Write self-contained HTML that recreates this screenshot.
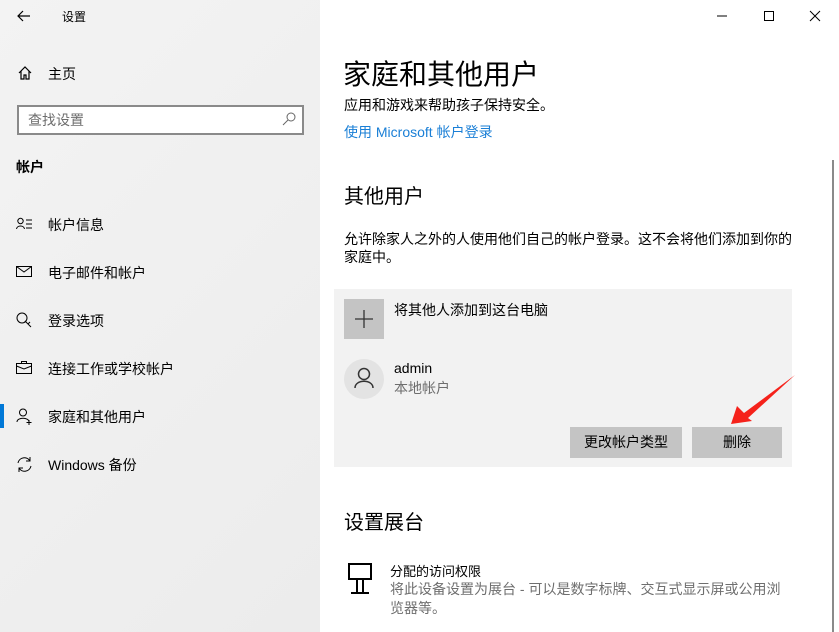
<!DOCTYPE html>
<html><head><meta charset="utf-8"><style>
*{margin:0;padding:0;box-sizing:border-box}
body{width:839px;height:632px;overflow:hidden;position:relative;background:#fff;font-family:"Liberation Sans","Microsoft YaHei","Noto Sans CJK SC",sans-serif;color:#000}
.a{position:absolute;white-space:nowrap}
#side{position:absolute;left:0;top:0;width:320px;height:632px;background:linear-gradient(135deg,#f3f3f3,#ececec)}
.it{position:absolute;left:48px;font-size:14px}
.ic{position:absolute;left:16px}
</style></head><body>
<div id="side">
<svg class="a" style="left:16px;top:9px" width="16" height="14"><path d="M14 7H2M7 2L2 7L7 12" fill="none" stroke="#000" stroke-width="1.2"/></svg>
<div class="a" style="left:62px;top:8px;font-size:12px">设置</div>
<svg class="a" style="left:17px;top:65px" width="16" height="16"><path d="M2 8L8 2L14 8M4 6V14H7V10H9V14H12V6" fill="none" stroke="#000" stroke-width="1.2"/></svg>
<div class="a" style="left:48px;top:64px;font-size:14px">主页</div>
<div class="a" style="left:17px;top:105px;width:287px;height:30px;border:2px solid #8a8a8a;background:#fff"></div>
<div class="a" style="left:28px;top:110px;font-size:14px;color:#6d6d6d">查找设置</div>
<svg class="a" style="left:281px;top:111px" width="16" height="16"><circle cx="10" cy="6" r="4" fill="none" stroke="#666" stroke-width="1"/><path d="M7 9L2 14" stroke="#666"/></svg>
<div class="a" style="left:16px;top:157px;font-size:14px;font-weight:bold">帐户</div>
<svg class="ic" style="top:217px" width="18" height="14"><circle cx="4.5" cy="4" r="2.7" fill="none" stroke="#000"/><path d="M0.5 12C1 8 8 8 8.5 12M10 3H16M10 7H16M10 11H16" fill="none" stroke="#000"/></svg>
<div class="it" style="top:215px">帐户信息</div>
<svg class="ic" style="top:266px" width="18" height="12"><rect x="0.5" y="0.5" width="15" height="10" fill="none" stroke="#000"/><path d="M0.5 0.5L8 6L15.5 0.5" fill="none" stroke="#000"/></svg>
<div class="it" style="top:263px">电子邮件和帐户</div>
<svg class="ic" style="top:312px" width="18" height="17"><circle cx="6" cy="6" r="5" fill="none" stroke="#000"/><path d="M9 9L15 15M12 12L14 10" fill="none" stroke="#000"/></svg>
<div class="it" style="top:311px">登录选项</div>
<svg class="ic" style="top:361px" width="18" height="13"><rect x="0.5" y="2.5" width="15" height="10" fill="none" stroke="#000"/><path d="M5.5 2.5V0.5H10.5V2.5M0.5 5L8 8L15.5 5" fill="none" stroke="#000"/></svg>
<div class="it" style="top:359px">连接工作或学校帐户</div>
<div class="a" style="left:0;top:404px;width:4px;height:24px;background:#0078d7"></div>
<svg class="ic" style="top:408px" width="18" height="17"><circle cx="7" cy="4.5" r="3.5" fill="none" stroke="#000"/><path d="M1 14C1 9 13 9 13 14M13 12V17M10.5 14.5H15.5" fill="none" stroke="#000"/></svg>
<div class="it" style="top:407px">家庭和其他用户</div>
<svg class="ic" style="top:456px" width="18" height="17"><path d="M2 7A6.5 6.5 0 0 1 14 5M15 10A6.5 6.5 0 0 1 3 12M14 1V5H10M3 16V12H7" fill="none" stroke="#000"/></svg>
<div class="it" style="top:455px">Windows 备份</div>
</div>
<svg class="a" style="left:716px;top:8px" width="110" height="16"><path d="M1 8H11" stroke="#000"/><rect x="48.5" y="3.5" width="9" height="9" fill="none" stroke="#000"/><path d="M94 3L104 13M104 3L94 13" stroke="#000"/></svg>
<div class="a" style="left:343px;top:53px;font-size:28px">家庭和其他用户</div>
<div class="a" style="left:344px;top:95px;font-size:14px">应用和游戏来帮助孩子保持安全。</div>
<div class="a" style="left:344px;top:122px;font-size:14px;color:#1a7fd6">使用 Microsoft 帐户登录</div>
<div class="a" style="top:160px;width:2px;height:472px;background:#8a8a8a;left:832px"></div>
<div class="a" style="left:344px;top:180px;font-size:20px">其他用户</div>
<div class="a" style="left:344px;top:230px;font-size:14px;line-height:18px;white-space:normal;width:455px">允许除家人之外的人使用他们自己的帐户登录。这不会将他们添加到你的家庭中。</div>
<div class="a" style="left:334px;top:289px;width:458px;height:178px;background:#f2f2f2"></div>
<div class="a" style="left:344px;top:299px;width:40px;height:40px;background:#c4c4c4"></div>
<svg class="a" style="left:344px;top:299px" width="40" height="40"><path d="M20 11V29M11 20H29" stroke="#333" stroke-width="1.3"/></svg>
<div class="a" style="left:394px;top:300px;font-size:14px">将其他人添加到这台电脑</div>
<div class="a" style="left:344px;top:359px;width:40px;height:40px;border-radius:50%;background:#e3e3e3"></div>
<svg class="a" style="left:344px;top:359px" width="40" height="40"><circle cx="20" cy="15" r="5.5" fill="none" stroke="#333" stroke-width="1.5"/><path d="M11 29C11 20 29 20 29 29" fill="none" stroke="#333" stroke-width="1.5"/></svg>
<div class="a" style="left:394px;top:360px;font-size:14px">admin</div>
<div class="a" style="left:394px;top:378px;font-size:14px;color:#6e6e6e">本地帐户</div>
<div class="a" style="left:570px;top:427px;width:112px;height:31px;background:#c4c4c4;font-size:14px;text-align:center;line-height:31px">更改帐户类型</div>
<div class="a" style="left:692px;top:427px;width:90px;height:31px;background:#c4c4c4;font-size:14px;text-align:center;line-height:31px">删除</div>
<svg class="a" style="left:0;top:0" width="839" height="632"><polygon points="731,424 737,406 744,413 795,375 748,418 752,421" fill="#f5221b"/></svg>
<div class="a" style="left:344px;top:506px;font-size:20px">设置展台</div>
<svg class="a" style="left:348px;top:563px" width="28" height="32"><rect x="1" y="1" width="22" height="15" fill="none" stroke="#000" stroke-width="2"/><path d="M9 16V30M15 16V30M3 30H21" fill="none" stroke="#000" stroke-width="2"/></svg>
<div class="a" style="left:390px;top:561px;font-size:13px">分配的访问权限</div>
<div class="a" style="left:390px;top:580px;font-size:14px;line-height:19px;color:#6e6e6e;white-space:normal;width:398px">将此设备设置为展台 - 可以是数字标牌、交互式显示屏或公用浏览器等。</div>
</body></html>
